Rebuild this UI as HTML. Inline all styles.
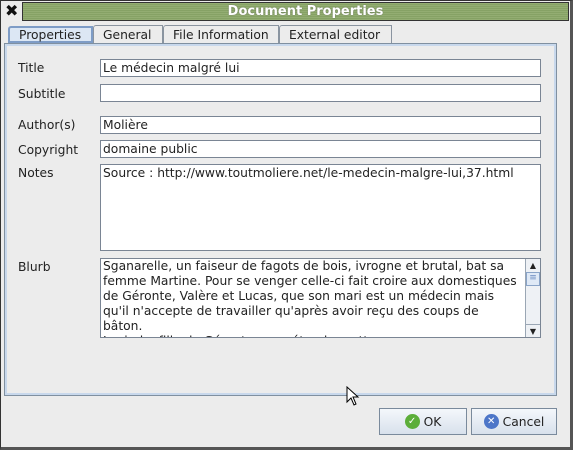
<!DOCTYPE html>
<html><head><style>
*{box-sizing:border-box;margin:0;padding:0}
body{width:573px;height:450px;background:#ececec;font-family:"DejaVu Sans",sans-serif;font-size:12.3px;color:#222;position:relative;overflow:hidden}
.win{position:absolute;left:0;top:0;width:573px;height:450px;border:1px solid #333;border-right:3px solid #555;border-bottom:3px solid #555}
.title{position:absolute;left:22px;top:2px;width:547px;height:19px;background:repeating-linear-gradient(#93ad72 0 1px,#86a265 1px 2px);border:1px solid #333;color:#fff;font-weight:bold;font-size:13px;text-align:center;line-height:17px;padding-left:20px;text-shadow:0 0 1px #555}
.x{position:absolute;left:5px;top:1px;font-weight:bold;font-size:16px;color:#111}
.tab{position:absolute;top:25px;height:18px;border:1px solid #8a94a0;border-bottom:none;background:#ececec;font-size:12.3px;line-height:18px;padding-left:9px;border-radius:3px 0 0 0}
.tab.sel{background:#dce7f4;border:2px solid #7e9cc6;top:26px;height:17px;line-height:15px}
.panel{position:absolute;left:4px;top:43px;width:553px;height:353px;border:1px solid #8090a0;box-shadow:inset 0 0 0 2px #c8d8ec}
.lab{position:absolute;left:18px;font-size:12.3px}
.fld{position:absolute;left:100px;width:441px;height:18px;background:#fff;border:1px solid #7a8594;font-size:12.3px;line-height:17px;padding-left:2px;overflow:hidden;white-space:nowrap}
.btn{position:absolute;top:408px;height:27px;border:1px solid #7a8a9c;background:linear-gradient(#f4f7fb,#d8e1ec);font-size:12.3px;display:flex;align-items:center;justify-content:center}
.ic{display:inline-block;width:15px;height:15px;border-radius:50%;margin-right:4px;color:#fff;font-size:10px;line-height:15px;text-align:center;font-weight:bold}
</style></head><body>
<div class="win"></div>
<div class="x">✖</div>
<div class="title">Document Properties</div>
<div class="tab sel" style="left:8px;width:85px">Properties</div>
<div class="tab" style="left:93px;width:70px">General</div>
<div class="tab" style="left:163px;width:116px">File Information</div>
<div class="tab" style="left:279px;width:113px">External editor</div>
<div class="panel"></div>
<div class="lab" style="top:61px">Title</div><div class="fld" style="top:59px">Le médecin malgré lui</div>
<div class="lab" style="top:87px">Subtitle</div><div class="fld" style="top:84px"></div>
<div class="lab" style="top:118px">Author(s)</div><div class="fld" style="top:116px">Molière</div>
<div class="lab" style="top:143px">Copyright</div><div class="fld" style="top:140px">domaine public</div>
<div class="lab" style="top:166px">Notes</div><div class="fld" style="top:164px;height:87px">Source : http://www.toutmoliere.net/le-medecin-malgre-lui,37.html</div>
<div class="lab" style="top:260px">Blurb</div>
<div class="fld" style="top:258px;height:80px;line-height:15px;padding-right:16px">Sganarelle, un faiseur de fagots de bois, ivrogne et brutal, bat sa<br>femme Martine. Pour se venger celle-ci fait croire aux domestiques<br>de Géronte, Valère et Lucas, que son mari est un médecin mais<br>qu'il n'accepte de travailler qu'après avoir reçu des coups de<br>bâton.<br>Lucinde, fille de Géronte, se prétend muette pour ne pas</div>
<div style="position:absolute;left:525px;top:259px;width:15px;height:78px;background:#eef1f5;border-left:1px solid #9aa6b4">
<div style="height:13px;font-size:8px;text-align:center;line-height:13px">▲</div>
<div style="height:14px;background:#dfe9f6;border:1px solid #8aa4c8;font-size:9px;text-align:center;line-height:11px;color:#6a8ac0">≡</div>
<div style="position:absolute;bottom:0;width:14px;height:13px;font-size:8px;text-align:center;line-height:13px;border-top:1px solid #9aa6b4">▼</div></div>
<svg style="position:absolute;left:346px;top:386px" width="14" height="20" viewBox="0 0 14 20"><path d="M1 1 L1 16 L5 12 L8 19 L10 18 L7 11 L12 11 Z" fill="#fff" stroke="#000" stroke-width="1"/></svg>
<div class="btn" style="left:379px;width:88px"><span class="ic" style="background:#5cae3a">✓</span>OK</div>
<div class="btn" style="left:471px;width:86px"><span class="ic" style="background:#4d76c8">✕</span>Cancel</div>
</body></html>
